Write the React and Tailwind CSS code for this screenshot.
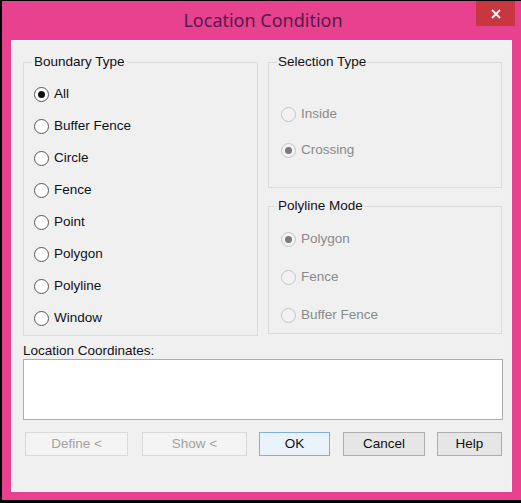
import React from "react";

function Radio({ checked, disabled }) {
  return (
    <span
      className={
        disabled
          ? "w-[15px] h-[15px] shrink-0 rounded-full border border-[#c4c4c4] bg-[#f2f2f2] flex items-center justify-center"
          : "w-[15px] h-[15px] shrink-0 rounded-full border border-[#555555] bg-white flex items-center justify-center"
      }
    >
      {checked ? (
        <span
          className={
            disabled
              ? "w-[7px] h-[7px] rounded-full bg-[#7a7a7a]"
              : "w-[7px] h-[7px] rounded-full bg-[#111111]"
          }
        />
      ) : null}
    </span>
  );
}

function Option({ label, checked, disabled, h }) {
  return (
    <div className={`flex items-center gap-[5px] ${h}`}>
      <Radio checked={checked} disabled={disabled} />
      <span className={disabled ? "text-[#8a8a8a]" : "text-[#101018]"}>{label}</span>
    </div>
  );
}

export default function App() {
  const font = { fontFamily: '"Liberation Sans", Arial, sans-serif' };
  return (
    <div
      className="w-[521px] h-[503px] bg-[#e8418f] border-l-2 border-t border-b-[3px] border-black flex flex-col"
      style={font}
    >
      {/* title bar */}
      <div className="h-[39px] grid grid-cols-[1fr_auto_1fr] items-start">
        <div />
        <div
          className="pt-[8px] text-[18px] leading-[22px] text-[#561a4c] pl-[3px]"
          style={{ fontFamily: '"Noto Sans", "Open Sans", sans-serif' }}
        >
          Location Condition
        </div>
        <div className="flex justify-end pr-[6px]">
          <div className="w-[39px] h-[25px] bg-[#c8363f] flex items-center justify-center">
            <svg width="10" height="10" viewBox="0 0 10 10">
              <path d="M1 1 L9 9 M9 1 L1 9" stroke="#ffffff" strokeWidth="1.8" />
            </svg>
          </div>
        </div>
      </div>

      {/* client area */}
      <div className="ml-[9px] mr-[9px] mb-[8px] flex-1 bg-[#f0f0f0] border border-[#f8f8f8] text-[13.5px] leading-[16px] flex flex-col pl-[11px] pr-[9px] pt-[13px]">
        <div className="flex gap-[10px]">
          <fieldset className="w-[235px] h-[282px] border border-[#dcdcdc] pl-[10px] pt-[8px]">
            <legend className="px-[2px] -ml-[2px] text-[#101018]">Boundary Type</legend>
            <Option label="All" checked h="h-[32px]" />
            <Option label="Buffer Fence" h="h-[32px]" />
            <Option label="Circle" h="h-[32px]" />
            <Option label="Fence" h="h-[32px]" />
            <Option label="Point" h="h-[32px]" />
            <Option label="Polygon" h="h-[32px]" />
            <Option label="Polyline" h="h-[32px]" />
            <Option label="Window" h="h-[32px]" />
          </fieldset>

          <div className="w-[234px] flex flex-col gap-[10px]">
            <fieldset className="h-[134px] border border-[#dcdcdc] pl-[12px] pt-[26px]">
              <legend className="px-[1px] -ml-[4px] text-[#101018]">Selection Type</legend>
              <Option label="Inside" disabled h="h-[36px]" />
              <Option label="Crossing" checked disabled h="h-[36px]" />
            </fieldset>
            <fieldset className="h-[136px] border border-[#dcdcdc] pl-[12px] pt-[6px]">
              <legend className="px-[1px] -ml-[4px] text-[#101018]">Polyline Mode</legend>
              <Option label="Polygon" checked disabled h="h-[38px]" />
              <Option label="Fence" disabled h="h-[38px]" />
              <Option label="Buffer Fence" disabled h="h-[38px]" />
            </fieldset>
          </div>
        </div>

        <div className="mt-[7px] text-[#101018]">Location Coordinates:</div>
        <div className="w-[480px] h-[61px] bg-white border border-[#acacac]" />

        <div className="mt-[12px] flex text-[13.5px]">
          <div className="ml-[2px] w-[103px] h-[24px] border border-[#dadada] bg-[#f4f4f4] text-[#a2a2a2] flex items-center justify-center">
            Define &lt;
          </div>
          <div className="ml-[14px] w-[105px] h-[24px] border border-[#dadada] bg-[#f4f4f4] text-[#a2a2a2] flex items-center justify-center">
            Show &lt;
          </div>
          <div className="ml-[12px] w-[71px] h-[24px] border border-[#7fb0dc] bg-[#eaf3fb] text-[#101010] flex items-center justify-center">
            OK
          </div>
          <div className="ml-[13px] w-[82px] h-[24px] border border-[#adadad] bg-[#e6e6e6] text-[#101010] flex items-center justify-center">
            Cancel
          </div>
          <div className="ml-[12px] w-[65px] h-[24px] border border-[#adadad] bg-[#e6e6e6] text-[#101010] flex items-center justify-center">
            Help
          </div>
        </div>
      </div>
    </div>
  );
}
